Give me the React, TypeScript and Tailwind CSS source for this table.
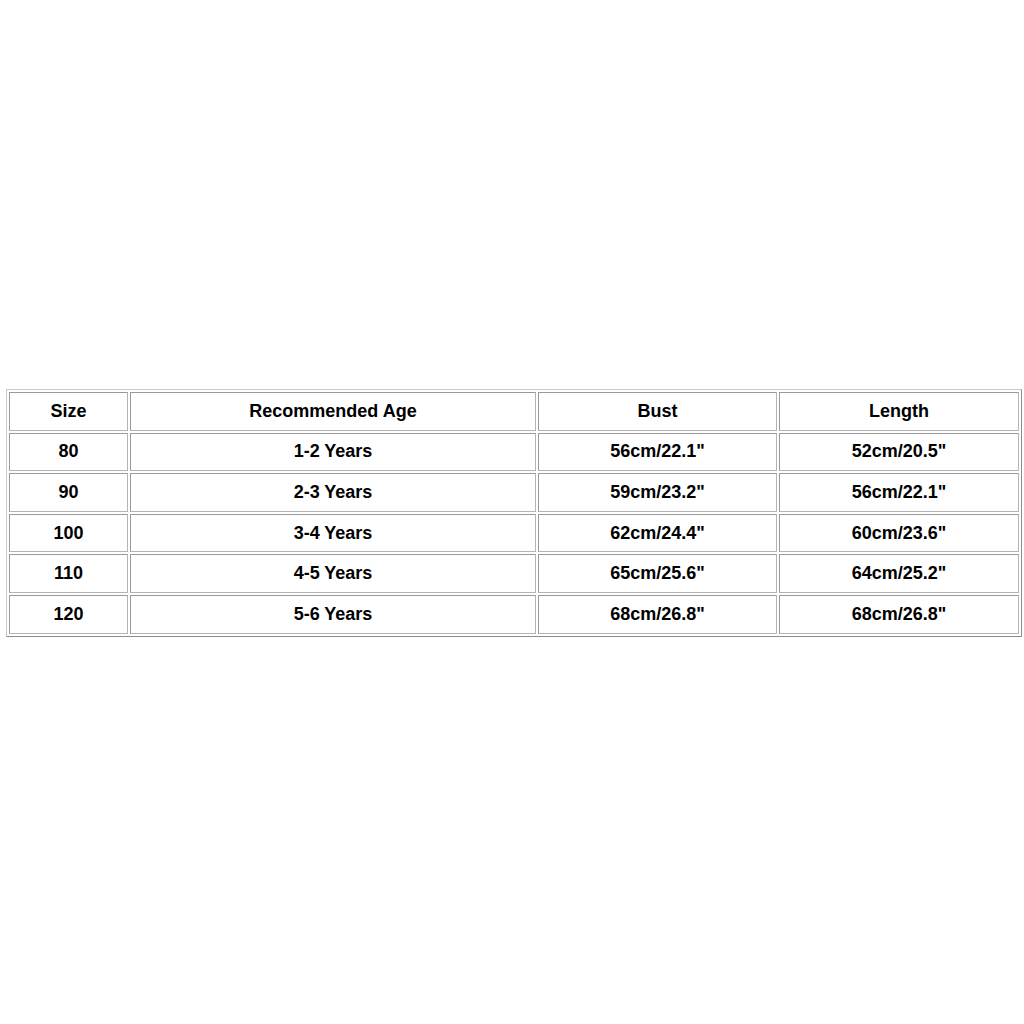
const header = ['Size', 'Recommended Age', 'Bust', 'Length'];

const rows = [
  ['80', '1-2 Years', '56cm/22.1"', '52cm/20.5"'],
  ['90', '2-3 Years', '59cm/23.2"', '56cm/22.1"'],
  ['100', '3-4 Years', '62cm/24.4"', '60cm/23.6"'],
  ['110', '4-5 Years', '65cm/25.6"', '64cm/25.2"'],
  ['120', '5-6 Years', '68cm/26.8"', '68cm/26.8"'],
];

const widths = ['w-[119px]', 'w-[406px]', 'w-[239px]', 'w-[240px]'];

function Cell({ text, i }: { text: string; i: number }) {
  return (
    <td
      className={`${widths[i]} h-[38.6px] p-0 text-center align-middle border border-t-[#9a9a9a] border-l-[#9a9a9a] border-b-[#b4b4b4] border-r-[#b4b4b4] text-[18px] font-bold text-black`}
    >
      {text}
    </td>
  );
}

export default function App() {
  return (
    <div className="min-h-screen bg-white pt-[389px] pl-[6px] font-['Liberation_Sans',Arial,sans-serif]">
      <table className="border-separate border-spacing-[2px] border border-t-[#c8c8c8] border-l-[#c8c8c8] border-b-[#8c8c8c] border-r-[#8c8c8c] table-fixed w-[1016px]">
        <tbody>
          <tr>
            {header.map((h, i) => (
              <Cell key={h} text={h} i={i} />
            ))}
          </tr>
          {rows.map((r) => (
            <tr key={r[0]}>
              {r.map((c, i) => (
                <Cell key={i} text={c} i={i} />
              ))}
            </tr>
          ))}
        </tbody>
      </table>
    </div>
  );
}
